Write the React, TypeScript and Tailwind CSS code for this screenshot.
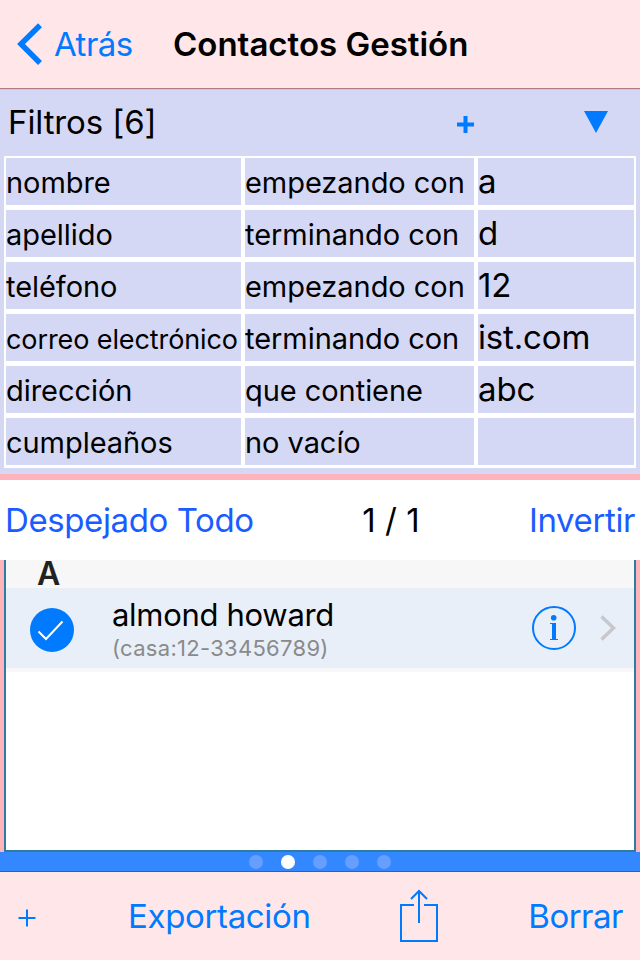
const FILTERS = [
  { field: "nombre", rule: "empezando con", value: "a" },
  { field: "apellido", rule: "terminando con", value: "d" },
  { field: "teléfono", rule: "empezando con", value: "12" },
  { field: "correo electrónico", rule: "terminando con", value: "ist.com", small: true },
  { field: "dirección", rule: "que contiene", value: "abc" },
  { field: "cumpleaños", rule: "no vacío", value: "" },
];

const PAGES = [0, 1, 2, 3, 4];

function NavBar() {
  return (
    <header className="flex h-[89px] items-center border-b border-[#b07a84] bg-[#ffe6e8]">
      <button className="ml-[17px] flex items-center text-[#007aff]">
        <svg width="26" height="42" viewBox="0 0 26 42" fill="none" stroke="currentColor" strokeWidth="5.5">
          <path d="M23 2.200 4 21l19 19" />
        </svg>
        <span className="ml-[11px] w-[118px] text-left text-[33px] leading-[42px] tracking-[-0.5px]">Atrás</span>
      </button>
      <h1 className="ml-px text-[33px] font-semibold leading-[42px] whitespace-nowrap">Contactos Gestión</h1>
    </header>
  );
}

function FilterPanel() {
  return (
    <section className="mt-px h-[384px] bg-[#d5d8f4] px-1">
      <div className="flex h-[66px] items-center">
        <h2 className="-mt-0.5 w-[453px] pl-[4px] text-[33px] leading-[40px] tracking-[-0.1px]">Filtros [6]</h2>
        <svg className="mt-[3px]" width="17" height="17" viewBox="0 0 17 17" fill="#007aff">
          <path d="M6.500 0h4v6.500H17v4h-6.500V17h-4v-6.500H0v-4h6.500z" />
        </svg>
        <svg className="ml-[110px] -mt-[2px]" width="24" height="22" viewBox="0 0 24 22" fill="#007aff">
          <path d="M0 0h24L12 22z" />
        </svg>
      </div>
      <div className="grid h-[312px] grid-cols-[235px_229px_156px] grid-rows-[repeat(6,47px)] gap-x-1 gap-y-[5px] bg-white px-0.5 pt-0.5 text-[29px] leading-[47px] whitespace-nowrap">
        {FILTERS.map((f) => (
          <div key={f.field} className="contents">
            <div className="bg-[#d5d8f4] pt-px tracking-[-0.05px]">
              <span className={f.small ? "text-[27px] tracking-[-0.1px]" : ""}>{f.field}</span>
            </div>
            <div className="bg-[#d5d8f4] pt-px tracking-[-0.05px]">{f.rule}</div>
            <div className="bg-[#d5d8f4] text-[33px] tracking-[-0.15px]">{f.value}</div>
          </div>
        ))}
      </div>
    </section>
  );
}

function SelectionBar() {
  return (
    <div className="mt-1.5 flex h-20 items-center bg-white pt-0.5 text-[33px] whitespace-nowrap">
      <button className="w-[354px] pl-[5px] text-left tracking-[-0.4px] text-[#1a5cff]">Despejado Todo</button>
      <span className="w-[74px] text-center">1 / 1</span>
      <button className="flex-1 pr-[5px] text-right tracking-[-0.4px] text-[#1a5cff]">Invertir</button>
    </div>
  );
}

function ContactList() {
  return (
    <section className="mx-1 h-[292px] border-2 border-t-0 border-[#2c7da0] bg-white">
      <div className="h-7 bg-[#f7f7f7] pl-[31px] text-[32px] font-semibold leading-[27px] text-[#222]">A</div>
      <div className="flex h-[84px] items-start border-b-4 border-[#f7f7f7] bg-[#e8eff9]">
        <svg className="mt-5 ml-6" width="44" height="44" viewBox="0 0 44 44" fill="none">
          <circle cx="22" cy="22" r="22" fill="#007aff" />
          <path d="M8.500 23.500 16 31l16.500-17.500" stroke="#fff" strokeWidth="2" />
        </svg>
        <div className="ml-[38px] w-[420px] whitespace-nowrap">
          <div className="mt-[8px] text-[31px] leading-[38px] tracking-[-0.3px]">almond howard</div>
          <div className="text-[22px] leading-[28px] tracking-[0.3px] text-[#8a8a8a]">(casa:12-33456789)</div>
        </div>
        <svg className="mt-[18px] shrink-0" width="44" height="44" viewBox="0 0 44 44" fill="#007aff">
          <circle cx="22" cy="22" r="21" fill="none" stroke="#007aff" strokeWidth="2" />
          <circle cx="21.700" cy="11.700" r="2.800" />
          <path d="M18 17h6v16h2v1h-8v-1h2V18h-2z" />
        </svg>
        <svg className="mt-[27px] ml-[24px] shrink-0" width="17" height="26" viewBox="0 0 17 26" fill="none" stroke="#c7c7cc" strokeWidth="3.500">
          <path d="M1.500 1.500 13.500 13 1.500 24.500" />
        </svg>
      </div>
    </section>
  );
}

function PageDots() {
  return (
    <div className="flex h-5 items-center justify-center gap-[18px] border-b border-[#1f66c4] bg-[#3488ff]">
      {PAGES.map((p) => (
        <span key={p} className={p === 1 ? "size-3.5 rounded-full bg-white" : "size-3.5 rounded-full bg-[#669fff]"} />
      ))}
    </div>
  );
}

function Toolbar() {
  return (
    <footer className="flex h-[88px] items-center bg-[#ffe6e8] text-[33px] whitespace-nowrap text-[#007aff]">
      <svg className="mt-[4px] ml-[18px]" width="18" height="18" viewBox="0 0 18 18" stroke="currentColor" strokeWidth="2">
        <path d="M9 0.500v17M0.500 9h17" />
      </svg>
      <button className="mt-0.5 ml-[92px] w-[272px] text-left tracking-[-0.35px]">Exportación</button>
      <svg width="38" height="54" viewBox="0 0 38 54" fill="none" stroke="currentColor" strokeWidth="2">
        <path d="M14 16H1v36h36V16H24M19 34V2M11 10l8-8 8 8" />
      </svg>
      <button className="mt-0.5 flex-1 pr-[17px] text-right tracking-[-0.5px]">Borrar</button>
    </footer>
  );
}

export default function App() {
  return (
    <main className="h-[960px] w-[640px] overflow-hidden bg-[#ffb3ba] font-[Inter,sans-serif] text-black">
      <NavBar />
      <FilterPanel />
      <SelectionBar />
      <ContactList />
      <PageDots />
      <Toolbar />
    </main>
  );
}
